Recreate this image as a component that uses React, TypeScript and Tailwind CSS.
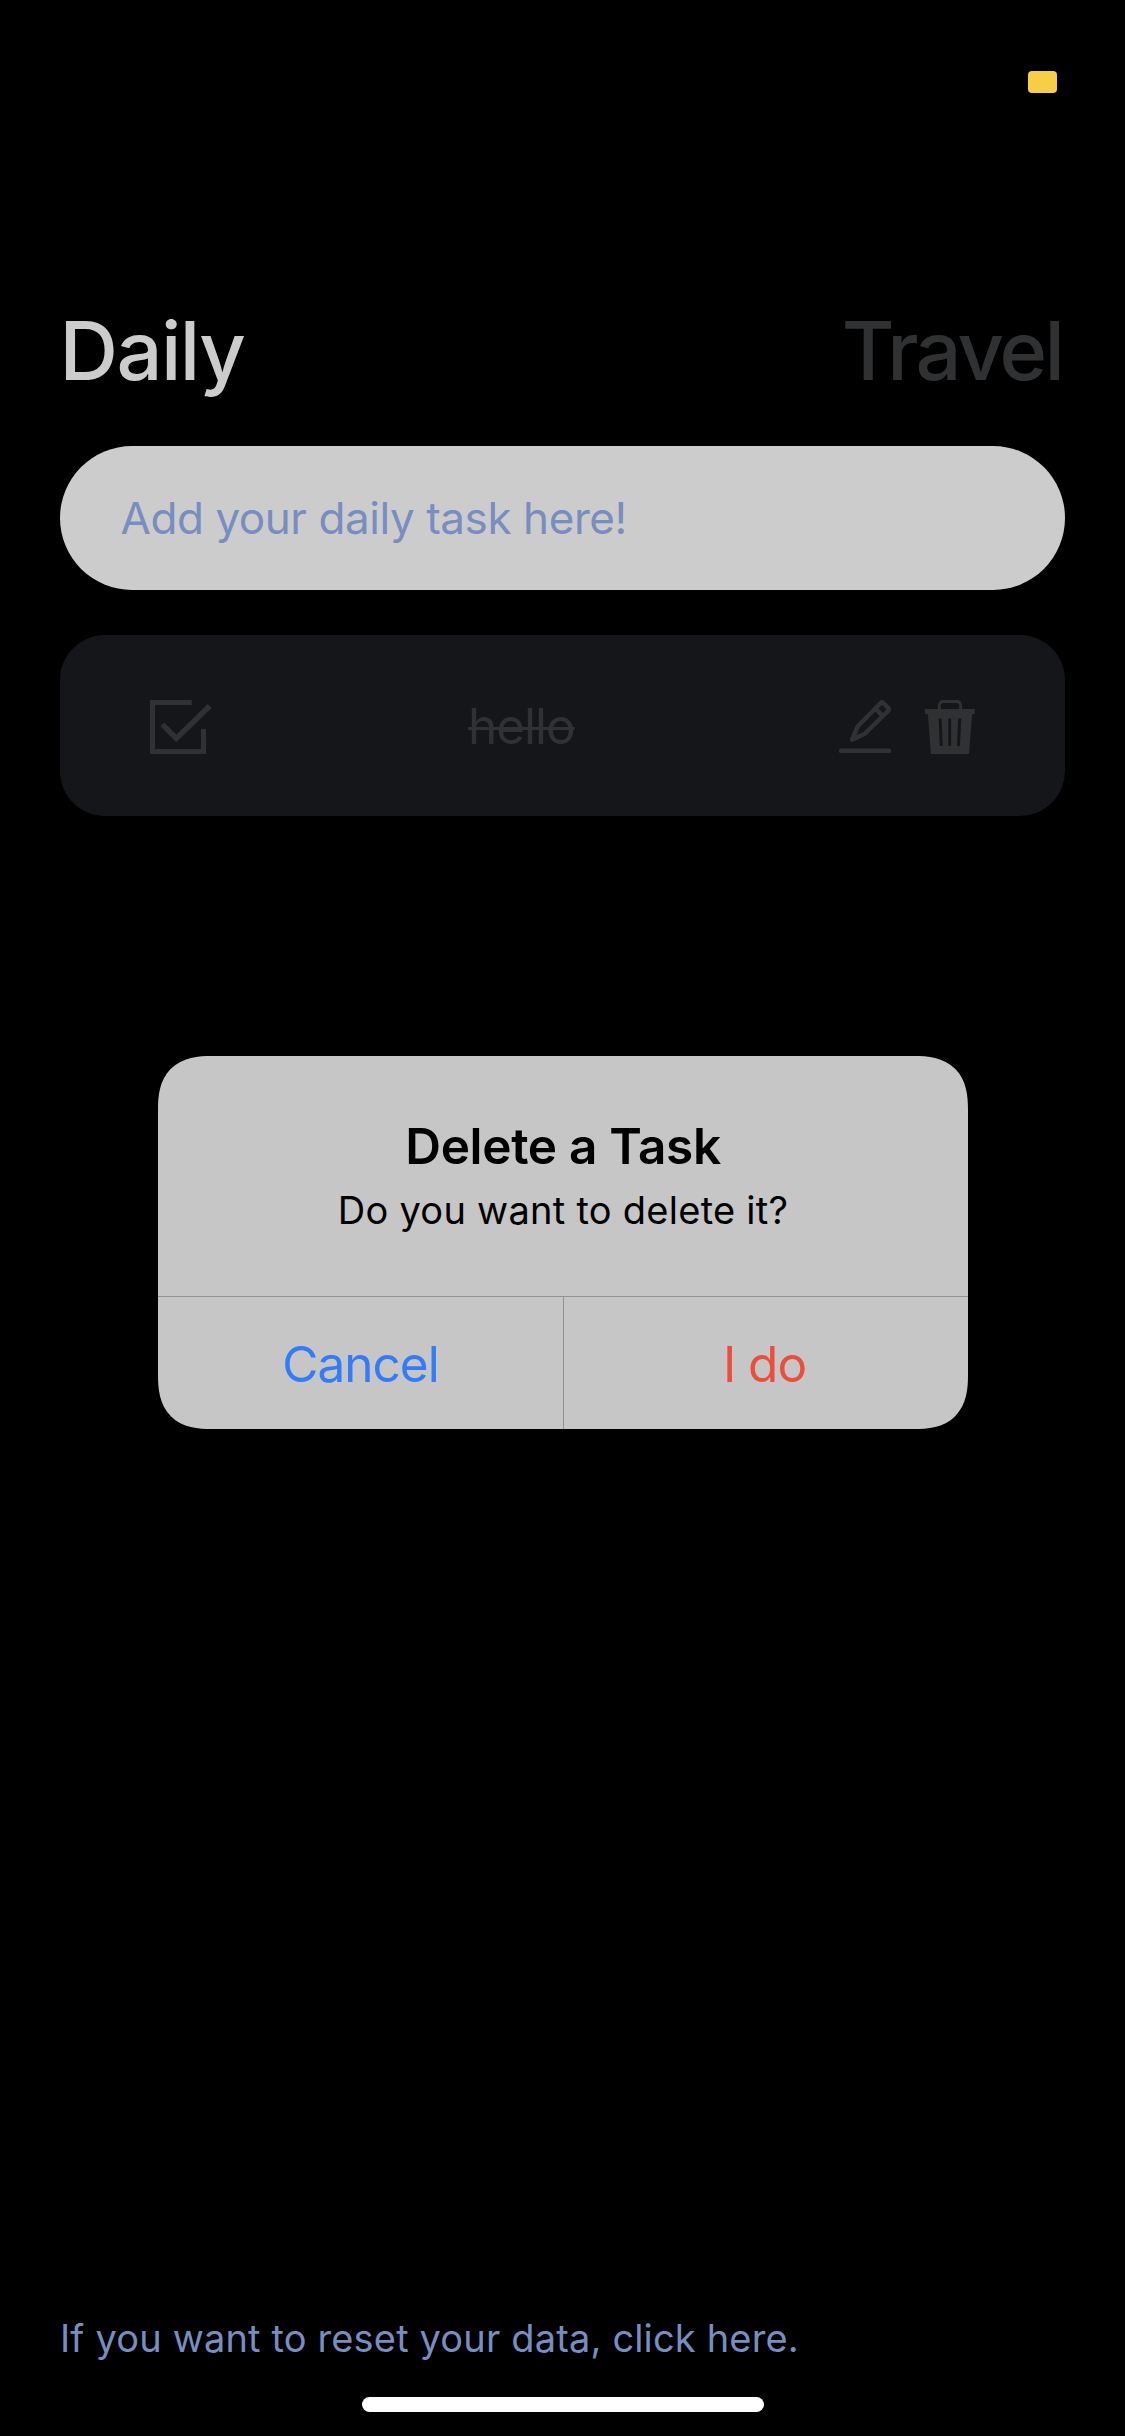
function CheckIcon() {
  return (
    <svg width="62" height="54" viewBox="0 0 62 54" fill="none" stroke="currentColor">
      <path d="M41.7 2.5H2.5V51.5H53.5V29" strokeWidth="5" />
      <path d="M12.3 24.3L26.3 38.5L59.6 6" strokeWidth="5.4" />
    </svg>
  );
}

function PencilIcon() {
  return (
    <svg
      width="52"
      height="54"
      viewBox="0 0 52 54"
      fill="none"
      stroke="currentColor"
      strokeWidth="4.4"
      strokeLinecap="round"
      strokeLinejoin="round"
    >
      <path d="M13 39.7L19 26L41.6 3.1Q43 1.7 44.4 3.1L49.2 7.9Q50.6 9.3 49.2 10.7L25.8 33.8Z" />
      <path d="M37 9.2L43.2 15.4M2 50.8H50" />
    </svg>
  );
}

function TrashIcon() {
  return (
    <svg width="50" height="54" viewBox="0 0 50 54" fill="currentColor">
      <path
        d="M14.4 10V5.4Q14.4 1.5 18.3 1.5H31.7Q35.6 1.5 35.6 5.4V10"
        fill="none"
        stroke="currentColor"
        strokeWidth="2.8"
      />
      <path
        fillRule="evenodd"
        d="M0 9H49.6V14H47.2L44 52.8Q43.9 54 42.7 54H7.1Q5.9 54 5.8 52.8L2.8 14H0ZM13.6 18.4L14.8 45.9H17.8L16.6 18.4ZM23.3 18.4V45.9H26.2V18.4ZM33.2 18.4L32 45.9H35L36.2 18.4Z"
      />
    </svg>
  );
}

export default function App() {
  return (
    <div className="relative flex h-[2436px] w-[1125px] flex-col overflow-hidden bg-black font-['Inter',sans-serif]">
      <div className="flex h-[301px] justify-end pt-[71px] pr-[68px]">
        <div className="h-[22px] w-[29px] rounded-[4px] bg-[#f8ce46]" />
      </div>

      <header className="flex justify-between pr-[63px] pl-[59.5px] text-[81px] leading-[101px] font-medium">
        <button className="tracking-[-1.5px] text-[#cccccc]">Daily</button>
        <button className="tracking-[-2.8px] text-[#303133]">Travel</button>
      </header>

      <main className="mt-[44px] flex flex-col gap-[45px] px-[60px]">
        <input
          className="h-[144px] w-full rounded-full bg-[#cccccc] px-[60.5px] text-[44px] tracking-[-0.43px] text-[#788dc0] placeholder:text-[#788dc0]"
          placeholder="Add your daily task here!"
        />
        <div className="flex h-[181px] items-start rounded-[45px] bg-[#15161a] pt-[65px] pr-[90px] pl-[90px] text-[#303133]">
          <button>
            <CheckIcon />
          </button>
          <div className="ml-[256px] grow text-[49.5px] leading-[52px] tracking-[-1.03px] line-through decoration-[3px]">
            hello
          </div>
          <div className="flex gap-[34px]">
            <button>
              <PencilIcon />
            </button>
            <button>
              <TrashIcon />
            </button>
          </div>
        </div>
      </main>

      <footer className="mt-auto flex flex-col">
        <button className="pl-[60px] text-left text-[38px] leading-[48px] tracking-[0.16px] text-[#788dc0]">
          If you want to reset your data, click here.
        </button>
        <div className="mt-[35px] mb-6 h-[15px] w-[402px] self-center rounded-full bg-white" />
      </footer>

      <div
        role="alertdialog"
        className="absolute top-[1056px] left-[158px] flex h-[373px] w-[810px] flex-col overflow-hidden rounded-[42px] bg-[#c6c6c6] text-center text-black supports-[corner-shape:squircle]:rounded-[54px] supports-[corner-shape:squircle]:[corner-shape:superellipse(1.35)]"
      >
        <div className="h-[240px] pt-[60px]">
          <h2 className="text-[49.5px] leading-[60px] font-semibold tracking-[-0.32px]">Delete a Task</h2>
          <p className="mt-[10px] text-[38px] leading-[48px] tracking-[0.27px]">Do you want to delete it?</p>
        </div>
        <div className="flex grow border-t border-[#939393] text-[49.5px] tracking-[-1px]">
          <button className="w-[406px] border-r border-[#939393] pt-[2px] text-[#347bf7]">Cancel</button>
          <button className="grow pt-[2px] pr-[3px] text-[#ea4f3d]">I do</button>
        </div>
      </div>
    </div>
  );
}
